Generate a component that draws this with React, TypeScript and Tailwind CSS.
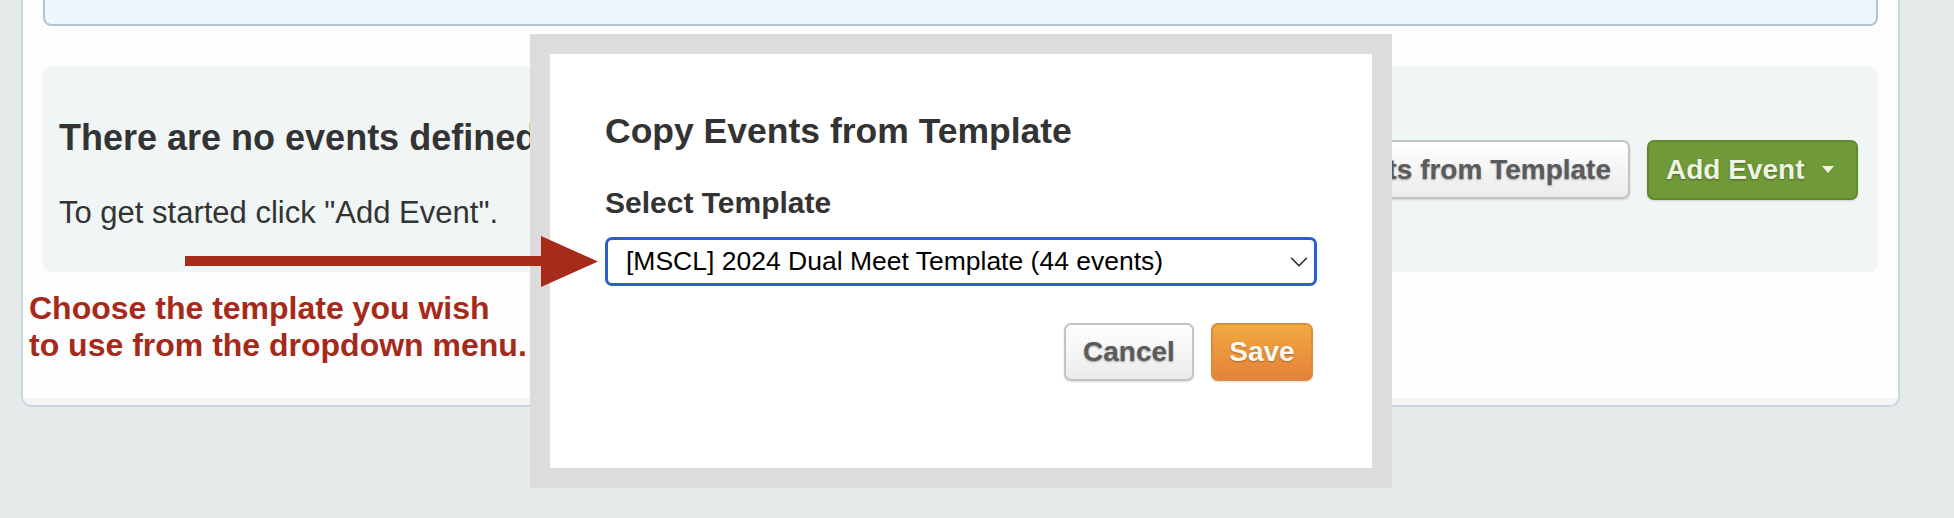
import { ChevronDown } from "lucide-react";

const font = "font-['Liberation_Sans',Arial,sans-serif]";
const greyButton =
  "flex h-[58px] items-center justify-center rounded-[7px] border-2 border-[#c3c3c3] bg-gradient-to-b from-white to-[#ebebeb] text-[28px] font-bold text-[#5b5b5b] shadow-[0_1px_2px_rgba(0,0,0,0.15)] [text-shadow:0_1px_2px_rgba(0,0,0,0.35)]";

const Arrow = () => (
  <svg
    className="absolute left-[185px] top-[236px]"
    width="415"
    height="52"
    viewBox="0 0 415 52"
  >
    <rect x="0" y="20" width="358" height="10" fill="#a72b1a" />
    <polygon points="356,0 413,25.5 356,51" fill="#a72b1a" />
  </svg>
);

const CopyTemplateModal = () => (
  <div className="absolute left-[530px] top-[34px] h-[454px] w-[862px] border-[20px] border-[#dcdcdc] bg-white px-[55px] pt-[58px]">
    <h2 className="text-[35.5px] font-bold leading-[1.1] text-[#333]">
      Copy Events from Template
    </h2>
    <p className="mt-[34px] text-[30px] font-bold leading-[36px] text-[#333]">
      Select Template
    </p>
    <div className="mt-[16px] flex h-[49px] items-center justify-between rounded-[7px] border-[3px] border-[#2a5fcb] bg-white pl-[18px]">
      <span className="text-[26.5px] leading-none text-black">
        [MSCL] 2024 Dual Meet Template (44 events)
      </span>
      <ChevronDown className="h-[30px] w-[30px] text-[#222]" strokeWidth={1.2} />
    </div>
    <div className="mt-[37px] mr-[4px] flex justify-end gap-[17px]">
      <button className={`${greyButton} w-[130px]`}>Cancel</button>
      <button className="flex h-[58px] w-[102px] items-center justify-center rounded-[7px] border-2 border-[#dc8a3c] bg-gradient-to-b from-[#f1a93f] to-[#e4823a] text-[28px] font-bold text-[#fff8ee] shadow-[0_1px_2px_rgba(0,0,0,0.15)] [text-shadow:0_1px_2px_rgba(0,0,0,0.3)]">
        Save
      </button>
    </div>
  </div>
);

const App = () => (
  <div className={`relative h-[518px] w-full overflow-hidden bg-[#e5eaea] ${font}`}>
    <div className="ml-[21px] w-[1879px] rounded-b-[10px] border-x-2 border-b-2 border-[#c9d7de] bg-[#f3f4f4] pb-[7px]">
      <div className="bg-[#fdfdfd] px-[20px] pb-[34px]">
        <div className="h-[26px] rounded-b-[8px] border-x-2 border-b-2 border-[#b2c4d2] bg-[#ecf6fd]" />

        {/* Empty events section */}
        <div className="mt-[41px] flex h-[205px] justify-between rounded-[8px] bg-[#f0f5f5] pl-[16px] pr-[20px]">
          <div className="pt-[51px] text-[#333]">
            <h3 className="text-[36px] font-bold leading-[1.1]">
              There are no events defined
            </h3>
            <p className="mt-[36px] text-[31px] leading-[1.2]">
              To get started click "Add Event".
            </p>
          </div>
          <div className="flex items-center gap-[17px]">
            <button className={`${greyButton} h-[59px] px-[17px]`}>
              Copy Events from Template
            </button>
            <button className="flex h-[60px] w-[211px] items-center rounded-[7px] border-2 border-[#5f892e] bg-[#6f9a37] pl-[17px] text-[28px] font-bold text-[#eef3e4] shadow-[0_1px_2px_rgba(0,0,0,0.15)] [text-shadow:0_1px_2px_rgba(0,0,0,0.35)]">
              Add Event
              <span className="ml-[18px] h-0 w-0 border-x-[6px] border-t-[7px] border-x-transparent border-t-[#eef3e4]" />
            </button>
          </div>
        </div>

        <p className="-ml-[14px] mt-[18px] text-[32px] font-bold leading-[37px] text-[#a52a1a]">
          Choose the template you wish
          <br />
          to use from the dropdown menu.
        </p>
      </div>
    </div>

    <CopyTemplateModal />
    <Arrow />
  </div>
);

export default App;
